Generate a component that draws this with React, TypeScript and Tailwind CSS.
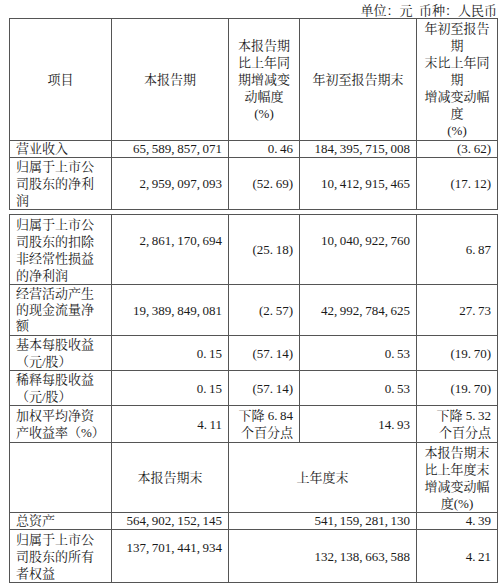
import type { ReactNode } from "react";

// Quarterly key-figures table: two stacked bordered tables with a small gap between them.

const font = {
  fontFamily: '"Liberation Serif", "Noto Serif CJK SC", "Noto Sans CJK SC", serif',
};

// SimSun-style numbers: widen the separators a little.
function num(v: string) {
  return v.replace(/,/g, ",\u2009").replace(/\./g, ".\u2009");
}

const cell = "border border-[#555] px-[6px] py-0 text-[13px] leading-[17px] text-[#1a1a1a]";

// tight = 16px line boxes, for rows whose height is exactly filled by text
function Lines({ lines, tight }: { lines: string[]; tight?: boolean }) {
  return (
    <>
      {lines.map((l, i) => (
        <span
          key={i}
          className={`block ${tight ? "h-[16px] leading-[16px]" : "h-[17px]"} overflow-visible whitespace-nowrap`}
        >
          {l}
        </span>
      ))}
    </>
  );
}

function Label({ children }: { children: ReactNode }) {
  return <td className={`${cell} text-left`}>{children}</td>;
}

function Num({ v, className = "", tight }: { v: string; className?: string; tight?: boolean }) {
  return (
    <td className={`${cell} text-right ${className}`}>
      <Lines lines={[num(v)]} tight={tight} />
    </td>
  );
}

function Head({ lines, span }: { lines: string[]; span?: number }) {
  return (
    <td className={`${cell} text-center`} colSpan={span}>
      <Lines lines={lines} />
    </td>
  );
}

function Cols() {
  return (
    <colgroup>
      <col className="w-[102px]" />
      <col className="w-[117px]" />
      <col className="w-[71px]" />
      <col className="w-[117px]" />
      <col className="w-[81px]" />
    </colgroup>
  );
}

export default function App() {
  return (
    <div className="w-[500px] h-[584px] bg-white" style={font}>
      <div className="h-[18px] pt-[4px] pr-[3px] text-right text-[13px] leading-[14px] text-[#1a1a1a]">
        单位：元&nbsp;&nbsp;币种：人民币
      </div>

      <table className="ml-[9px] w-[488px] table-fixed border-collapse">
        <Cols />
        <tbody>
          <tr className="h-[122px]">
            <Head lines={["项目"]} />
            <Head lines={["本报告期"]} />
            <Head lines={["本报告期", "比上年同", "期增减变", "动幅度", "(%)"]} />
            <Head lines={["年初至报告期末"]} />
            <Head lines={["年初至报告", "期", "末比上年同", "期", "增减变动幅", "度", "(%)"]} />
          </tr>
          <tr className="h-[17px]">
            <Label>
              <Lines lines={["营业收入"]} tight />
            </Label>
            <Num v="65,589,857,071" tight />
            <Num v="0.46" tight />
            <Num v="184,395,715,008" tight />
            <Num v="(3.62)" tight />
          </tr>
          <tr className="h-[52px]">
            <Label>
              <Lines lines={["归属于上市公", "司股东的净利", "润"]} />
            </Label>
            <Num v="2,959,097,093" />
            <Num v="(52.69)" />
            <Num v="10,412,915,465" />
            <Num v="(17.12)" />
          </tr>
        </tbody>
      </table>

      <table className="ml-[9px] mt-[4px] w-[488px] table-fixed border-collapse">
        <Cols />
        <tbody>
          <tr className="h-[70px]">
            <Label>
              <Lines lines={["归属于上市公", "司股东的扣除", "非经常性损益", "的净利润"]} />
            </Label>
            <Num v="2,861,170,694" className="align-top pt-[17px]" />
            <Num v="(25.18)" />
            <Num v="10,040,922,760" className="align-top pt-[17px]" />
            <Num v="6.87" />
          </tr>
          <tr className="h-[51px]">
            <Label>
              <Lines lines={["经营活动产生", "的现金流量净", "额"]} tight />
            </Label>
            <Num v="19,389,849,081" />
            <Num v="(2.57)" />
            <Num v="42,992,784,625" />
            <Num v="27.73" />
          </tr>
          <tr className="h-[35px]">
            <Label>
              <Lines lines={["基本每股收益", "（元/股）"]} />
            </Label>
            <Num v="0.15" />
            <Num v="(57.14)" />
            <Num v="0.53" />
            <Num v="(19.70)" />
          </tr>
          <tr className="h-[35px]">
            <Label>
              <Lines lines={["稀释每股收益", "（元/股）"]} />
            </Label>
            <Num v="0.15" />
            <Num v="(57.14)" />
            <Num v="0.53" />
            <Num v="(19.70)" />
          </tr>
          <tr className="h-[37px]">
            <Label>
              <Lines lines={["加权平均净资", "产收益率（%）"]} />
            </Label>
            <Num v="4.11" />
            <td className={`${cell} text-right`}>
              <Lines lines={[`下降 ${num("6.84")}`, "个百分点"]} />
            </td>
            <Num v="14.93" />
            <td className={`${cell} text-right`}>
              <Lines lines={[`下降 ${num("5.32")}`, "个百分点"]} />
            </td>
          </tr>
          <tr className="h-[70px]">
            <td className={cell}></td>
            <Head lines={["本报告期末"]} />
            <Head lines={["上年度末"]} span={2} />
            <Head lines={["本报告期末", "比上年度末", "增减变动幅", "度(%)"]} />
          </tr>
          <tr className="h-[17px]">
            <Label>
              <Lines lines={["总资产"]} tight />
            </Label>
            <Num v="564,902,152,145" tight />
            <td className={`${cell} text-right`} colSpan={2}>
              <Lines lines={[num("541,159,281,130")]} tight />
            </td>
            <Num v="4.39" tight />
          </tr>
          <tr className="h-[53px]">
            <Label>
              <Lines lines={["归属于上市公", "司股东的所有", "者权益"]} />
            </Label>
            <Num v="137,701,441,934" className="align-top pt-[9px]" />
            <td className={`${cell} text-right`} colSpan={2}>
              <Lines lines={[num("132,138,663,588")]} />
            </td>
            <Num v="4.21" />
          </tr>
        </tbody>
      </table>
    </div>
  );
}
